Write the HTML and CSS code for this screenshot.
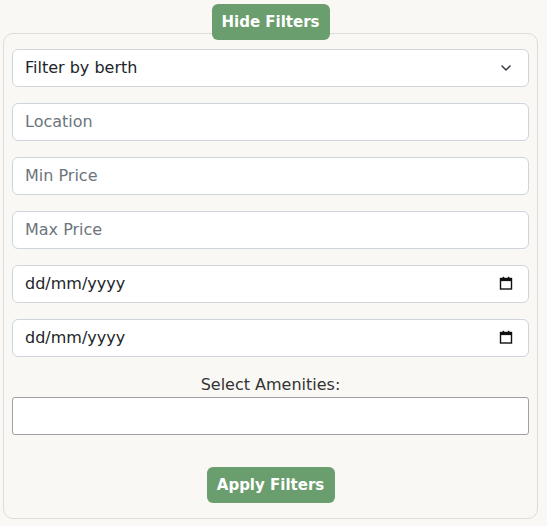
FILE: index.html
```html
<!DOCTYPE html>
<html lang="en">
<head>
<meta charset="utf-8">
<title>Filters</title>
<link rel="stylesheet" href="styles.css">
</head>
<body>
<div class="wrap">
  <button class="btn btn-toggle" type="button">Hide Filters</button>
  <form class="panel">
    <div class="select-wrap">
      <select class="field select">
        <option>Filter by berth</option>
      </select>
      <svg class="chevron" width="12" height="8" viewBox="0 0 12 8"><path d="M2 2 L6 6 L10 2" fill="none" stroke="#343a40" stroke-width="1.5" stroke-linecap="round" stroke-linejoin="round"/></svg>
    </div>
    <input class="field" type="text" placeholder="Location">
    <input class="field" type="text" placeholder="Min Price">
    <input class="field" type="text" placeholder="Max Price">
    <div class="field date">
      <span>dd/mm/yyyy</span>
      <svg class="cal" width="14" height="14" viewBox="0 0 14 14"><rect x="1.5" y="2.5" width="11" height="10.5" fill="none" stroke="#111" stroke-width="1.4"/><rect x="1.5" y="2.5" width="11" height="2.6" fill="#111"/><rect x="3.6" y="0.8" width="1.6" height="2.4" fill="#111"/><rect x="8.8" y="0.8" width="1.6" height="2.4" fill="#111"/></svg>
    </div>
    <div class="field date">
      <span>dd/mm/yyyy</span>
      <svg class="cal" width="14" height="14" viewBox="0 0 14 14"><rect x="1.5" y="2.5" width="11" height="10.5" fill="none" stroke="#111" stroke-width="1.4"/><rect x="1.5" y="2.5" width="11" height="2.6" fill="#111"/><rect x="3.6" y="0.8" width="1.6" height="2.4" fill="#111"/><rect x="8.8" y="0.8" width="1.6" height="2.4" fill="#111"/></svg>
    </div>
    <div class="amenities">
      <label class="amen-label">Select Amenities:</label>
      <div class="amen-box"></div>
    </div>
    <button class="btn btn-apply" type="button">Apply Filters</button>
  </form>
</div>
</body>
</html>
```
FILE: styles.css
```css
* { box-sizing: border-box; }
html, body { margin: 0; padding: 0; }
body {
  background: #f9f8f4;
  font-family: "DejaVu Sans", "Noto Sans", sans-serif;
  color: #333;
}
.wrap {
  width: 535px;
  margin-left: 3px;
  padding-top: 4px;
  display: flex;
  flex-direction: column;
  align-items: center;
}
.btn {
  background: #6b9e6e;
  color: #fff;
  border: none;
  border-radius: 6px;
  font-family: "DejaVu Sans", sans-serif;
  font-weight: bold;
  font-size: 15px;
  height: 36px;
  padding: 0;
  white-space: nowrap;
  cursor: pointer;
}
.btn-toggle {
  position: relative;
  z-index: 1;
  margin-bottom: -7px;
  width: 118px;
}
.panel {
  width: 535px;
  border: 1px solid #dcdcdc;
  border-radius: 10px;
  padding: 15px 8px 15px;
  display: flex;
  flex-direction: column;
  gap: 16px;
  background: #f9f8f4;
}
.field {
  width: 100%;
  height: 38px;
  border: 1px solid #ced4da;
  border-radius: 6px;
  background: #fff;
  padding: 0 12px 2px;
  font-family: "DejaVu Sans", sans-serif;
  font-size: 16px;
  color: #212529;
  outline: none;
}
.field::placeholder { color: #6c757d; }
.select-wrap { position: relative; }
.select {
  appearance: none;
  -webkit-appearance: none;
  display: block;
}
.chevron {
  position: absolute;
  right: 17px;
  top: 15px;
  pointer-events: none;
}
.date {
  display: flex;
  align-items: center;
  justify-content: space-between;
  padding-right: 15px;
}
.date span { color: #212529; }
.amenities {
  display: flex;
  flex-direction: column;
  align-items: center;
}
.amen-label {
  font-size: 16px;
  line-height: 24px;
  color: #333;
}
.amen-box {
  width: 100%;
  height: 38px;
  background: #fff;
  border: 1px solid #a0a0a0;
  border-radius: 3px;
}
.btn-apply {
  align-self: center;
  margin-top: 16px;
  width: 128px;
}
```
